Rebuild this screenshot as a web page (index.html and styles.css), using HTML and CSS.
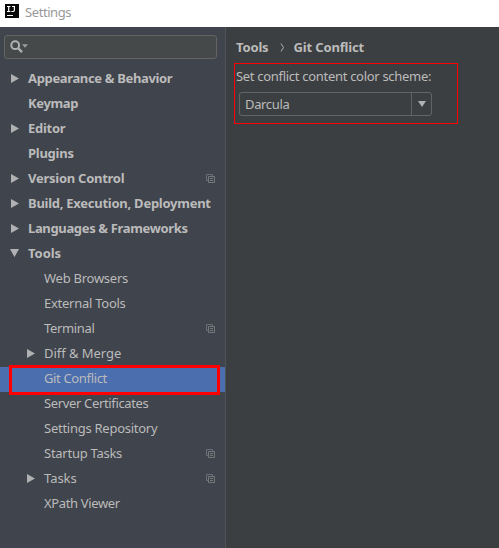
FILE: index.html
```
<!DOCTYPE html>
<html lang="en">
<head>
<meta charset="utf-8">
<title>Settings</title>
<link rel="stylesheet" href="styles.css">
</head>
<body>
<svg width="0" height="0" class="defs" aria-hidden="true">
  <symbol id="right" viewBox="0 0 8 9"><path d="M0 0L8 4.5L0 9z" fill="#afb1b3"/></symbol>
  <symbol id="down" viewBox="0 0 9 8"><path d="M0 0H9L4.5 8z" fill="#afb1b3"/></symbol>
  <symbol id="copy" viewBox="0 0 9 9"><path d="M2 6.5H.5V.5H6.5V2" fill="none" stroke="#667078"/><path d="M2.5 2.5h6v6h-6zM4 4.5h3M4 6.5h3" fill="none" stroke="#74787b"/></symbol>
</svg>
<header class="titlebar">
  <svg class="logo" width="14" height="14" viewBox="0 0 14 14"><rect width="14" height="14" fill="#080808"/><path d="M2 2.5h3.4M3.7 2.5v5M2 7.5h3.4M7 2.5h2.4v3.6q0 1.4-1.3 1.4H6.4M2 11.5h6" fill="none" stroke="#fff" stroke-width="1.2"/></svg>
  <span>Settings</span>
</header>
<main class="window">
  <aside class="sidebar">
    <div class="search">
      <svg width="20" height="14" viewBox="0 0 20 14"><circle cx="5.2" cy="5.2" r="3.9" fill="none" stroke="#afb1b3" stroke-width="2"/><path d="M8 8l4 4.2" stroke="#afb1b3" stroke-width="2.4"/><path d="M12 4.2h6l-3 3.5z" fill="#9a9da0"/></svg>
    </div>
    <nav class="tree">
      <div class="row group"><svg class="arrow"><use href="#right"/></svg><span class="tight">Appearance &amp; Behavior</span></div>
      <div class="row group"><span class="tight">Keymap</span></div>
      <div class="row group"><svg class="arrow"><use href="#right"/></svg><span>Editor</span></div>
      <div class="row group"><span>Plugins</span></div>
      <div class="row group"><svg class="arrow"><use href="#right"/></svg><span>Version Control</span><svg class="copy"><use href="#copy"/></svg></div>
      <div class="row group"><svg class="arrow"><use href="#right"/></svg><span>Build, Execution, Deployment</span></div>
      <div class="row group"><svg class="arrow"><use href="#right"/></svg><span class="tight">Languages &amp; Frameworks</span></div>
      <div class="row group"><svg class="arrow open"><use href="#down"/></svg><span class="wide">Tools</span></div>
      <div class="row child"><span>Web Browsers</span></div>
      <div class="row child"><span>External Tools</span></div>
      <div class="row child"><span class="tight">Terminal</span><svg class="copy"><use href="#copy"/></svg></div>
      <div class="row child"><svg class="arrow"><use href="#right"/></svg><span class="wide">Diff &amp; Merge</span></div>
      <div class="row child selected"><span class="tight">Git Conflict</span></div>
      <div class="row child"><span class="tight">Server Certificates</span></div>
      <div class="row child"><span>Settings Repository</span></div>
      <div class="row child"><span>Startup Tasks</span><svg class="copy"><use href="#copy"/></svg></div>
      <div class="row child"><svg class="arrow"><use href="#right"/></svg><span class="wide">Tasks</span><svg class="copy"><use href="#copy"/></svg></div>
      <div class="row child"><span class="tight">XPath Viewer</span></div>
    </nav>
  </aside>
  <section class="content">
    <h1 class="crumbs"><span>Tools</span><svg width="5" height="9" viewBox="0 0 5 9"><path d="M1 .5L3.5 4.5L1 8.5" fill="none" stroke="#afb1b3"/></svg><span>Git Conflict</span></h1>
    <div class="scheme">
      <label>Set conflict content color scheme:</label>
      <div class="select"><span class="tight">Darcula</span><i><svg width="8" height="6"><path d="M0 0h8L4 6z" fill="#afb1b3"/></svg></i></div>
    </div>
  </section>
</main>
</body>
</html>
```
FILE: styles.css
```
* { box-sizing: border-box; }
body { margin: 0; width: 499px; height: 548px; overflow: hidden; background: #3c3f41; color: #bbb; font: 13px/25px "Noto Sans", sans-serif; letter-spacing: -.26px; white-space: nowrap; }
.defs { position: absolute; }
.tight { letter-spacing: -.35px; }
.wide { letter-spacing: -.04px; }
.titlebar { height: 27px; display: flex; align-items: flex-start; padding: 4px 5px; gap: 6px; background: #fff; color: #999; line-height: 16px; letter-spacing: -.42px; }
.window { display: flex; height: 521px; }
.sidebar { width: 226px; background: #40444c; border-right: 1px solid #515456; padding-top: 8px; }
.search { width: 213px; height: 24px; margin-left: 4px; padding: 4px 5px; border: 1px solid #646464; border-radius: 3px; background: #45494a; display: flex; }
.tree { margin-top: 8px; }
.row { position: relative; height: 25px; display: flex; line-height: 23px; }
.group { padding-left: 28px; font-weight: 700; }
.child { padding-left: 44px; }
.arrow { position: absolute; left: 11px; top: 7px; width: 8px; height: 9px; }
.arrow.open { left: 10px; width: 9px; height: 8px; }
.child .arrow { left: 27px; }
.copy { position: absolute; left: 206px; top: 7px; width: 9px; height: 9px; }
.selected { background: #4b6eaf; }
.selected::after { content: ""; box-sizing: border-box; position: absolute; left: 9px; top: -2px; width: 211px; height: 30px; border: 3px solid #f00; z-index: 1; }
.content { flex: 1; padding: 8px 0 0 8px; }
.crumbs { margin: 0; padding-left: 2px; font-size: 13px; line-height: 25px; display: flex; align-items: center; letter-spacing: -.15px; }
.crumbs svg { margin: 0 9px 0 11px; }
.scheme { width: 224px; height: 61px; margin-top: 3px; border: 1px solid #f00; padding-left: 1px; }
.scheme label { display: block; height: 28px; line-height: 24px; letter-spacing: -.3px; }
.select { width: 193px; height: 24px; margin-left: 3px; border: 1px solid #646464; border-radius: 3px; display: flex; line-height: 23px; }
.select span { flex: 1; padding-left: 5px; }
.select i { width: 20px; border-left: 1px solid #646464; display: flex; align-items: center; justify-content: center; }
```
